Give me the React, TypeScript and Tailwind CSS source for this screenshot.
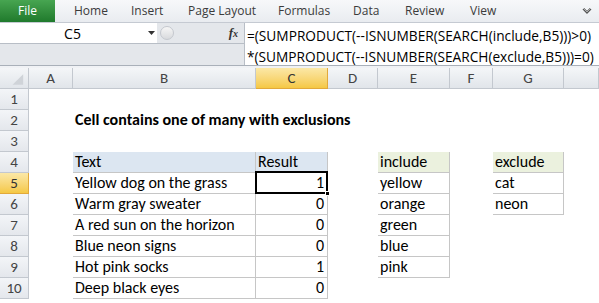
import React from "react";

const cols = ["", "A", "B", "C", "D", "E", "F", "G", ""];

const bRows: Record<number, [string, string]> = {
  4: ["Text", "Result"],
  5: ["Yellow dog on the grass", "1"],
  6: ["Warm gray sweater", "0"],
  7: ["A red sun on the horizon", "0"],
  8: ["Blue neon signs", "0"],
  9: ["Hot pink socks", "1"],
  10: ["Deep black eyes", "0"],
};
const eRows: Record<number, string> = { 4: "include", 5: "yellow", 6: "orange", 7: "green", 8: "blue", 9: "pink" };
const gRows: Record<number, string> = { 4: "exclude", 5: "cat", 6: "neon" };

function inTable(c: number, r: number) {
  if ((c === 2 || c === 3) && r >= 4 && r <= 10) return true;
  if (c === 5 && r >= 4 && r <= 9) return true;
  if (c === 7 && r >= 4 && r <= 6) return true;
  return false;
}

function Cell({ c, r }: { c: number; r: number }) {
  const t = inTable(c, r);
  const leftOfTable = inTable(c + 1, r);
  const aboveTable = inTable(c, r + 1) && !t;
  let bg = "";
  if (r === 4 && (c === 2 || c === 3)) bg = "bg-[#dce6f1]";
  if (r === 4 && (c === 5 || c === 7)) bg = "bg-[#ebf1de]";
  const br = t || leftOfTable ? "border-r border-[#c6c6c6]" : "border-r border-transparent";
  const bb = t || aboveTable ? "border-b border-[#c6c6c6]" : "border-b border-transparent";
  let text = "";
  let align = "justify-start pl-[2px]";
  if (c === 2 && bRows[r]) text = bRows[r][0];
  if (c === 3 && bRows[r]) {
    text = bRows[r][1];
    if (r !== 4) align = "justify-end pr-[3px]";
  }
  if (c === 5 && eRows[r]) text = eRows[r];
  if (c === 7 && gRows[r]) text = gRows[r];
  const selected = c === 3 && r === 5;
  return (
    <div className={`relative flex items-end overflow-visible whitespace-nowrap ${bg} ${br} ${bb} ${align}`}>
      {c === 2 && r === 2 ? (
        <span className="relative z-10 font-bold text-[16px] leading-none pb-[2px] text-black">Cell contains one of many with exclusions</span>
      ) : (
        <span className="text-[16px] leading-none pb-[2px] text-black">{text}</span>
      )}
      {selected && (
        <div className="absolute left-[-1px] top-[-2px] right-[-1px] bottom-[-1px] border-2 border-black z-10">
          <div className="absolute right-[-4px] bottom-[-4px] w-[5px] h-[5px] bg-black border border-white" />
        </div>
      )}
    </div>
  );
}

export default function App() {
  const rows = Array.from({ length: 10 }, (_, i) => i + 1);
  return (
    <div className="w-[599px] h-[303px] overflow-hidden bg-white" style={{ fontFamily: "Carlito, Lato, 'Liberation Sans', sans-serif" }}>
      {/* Ribbon tabs */}
      <div className="h-[23px] flex items-stretch bg-gradient-to-b from-[#f7f8fa] to-[#e9ecf0] border-b border-[#c5cad2] text-[12px] text-[#3b3b3b]" style={{ fontFamily: "'Open Sans', 'Noto Sans', sans-serif" }}>
        <div className="w-[55px] flex items-center justify-center text-white bg-gradient-to-b from-[#47a551] to-[#1f7a2c]">File</div>
        <div className="flex items-center pl-[19px]">
          <span className="w-[57px]">Home</span>
          <span className="w-[57px]">Insert</span>
          <span className="w-[90px]">Page Layout</span>
          <span className="w-[75px]">Formulas</span>
          <span className="w-[52px]">Data</span>
          <span className="w-[65px]">Review</span>
          <span>View</span>
        </div>
        <div className="flex-1" />
        <div className="w-[24px] flex items-center justify-center text-[#555]">
          <svg width="10" height="8" viewBox="0 0 10 8"><path d="M1 2 L5 6 L9 2" fill="none" stroke="#555" strokeWidth="1.3" /><path d="M2 1 L5 4 L8 1" fill="none" stroke="#888" strokeWidth="1" /></svg>
        </div>
      </div>
      {/* Formula bar */}
      <div className="h-[43px] flex bg-[#e4e7eb] border-b border-[#a9b0b9]">
        <div className="w-[244px] flex flex-col">
          <div className="h-[21px] flex items-center bg-white border-b border-[#b8bec6]">
            <div className="w-[145px] h-full bg-white flex items-center justify-center text-[14px] text-black" style={{ fontFamily: "'Open Sans', sans-serif" }}>C5</div>
            <div className="w-[12px] flex items-center justify-center">
              <svg width="7" height="4" viewBox="0 0 7 4"><path d="M0 0 L7 0 L3.5 4 Z" fill="#333" /></svg>
            </div>
            <div className="flex-1 h-full bg-[#e4e7eb] flex items-center">
              <div className="ml-[3px] w-[14px] h-[14px] rounded-full border border-[#c4c8ce] bg-gradient-to-b from-[#f6f6f6] to-[#d8dadd]" />
              <div className="flex-1" />
              <span className="mr-[6px] italic font-bold text-[13px] text-[#333]" style={{ fontFamily: "'Liberation Serif', serif" }}>f<span className="text-[10px]">x</span></span>
            </div>
          </div>
          <div className="flex-1" />
        </div>
        <div className="flex-1 bg-white border-l border-[#b8bec6] pl-[2px] pt-[2px] text-[13.7px] leading-[21px] text-black whitespace-nowrap" style={{ fontFamily: "'Open Sans', sans-serif" }}>
          <div>=(SUMPRODUCT(--ISNUMBER(SEARCH(include,B5)))&gt;0)</div>
          <div>*(SUMPRODUCT(--ISNUMBER(SEARCH(exclude,B5)))=0)</div>
        </div>
      </div>
      <div className="h-[2px] bg-[#f0f2f5]" />
      {/* Grid */}
      <div className="grid grid-cols-[29px_44px_183px_72px_50px_72px_43px_71px_1fr] grid-rows-[21px_repeat(10,21px)]">
        {cols.map((c, i) => (
          <div
            key={"h" + i}
            className={`flex items-center justify-center text-[15px] border-b border-r ${
              i === 3
                ? "bg-gradient-to-b from-[#fbe8a6] to-[#f5c843] border-[#e2a93b] text-[#333]"
                : "bg-gradient-to-b from-[#f4f6f8] to-[#e1e5ea] border-[#c3c8cf] text-[#444]"
            }`}
          >
            {i === 0 ? (
              <svg width="29" height="21" viewBox="0 0 29 21"><path d="M24 6 L24 17 L13 17 Z" fill="#cfd3d8" /></svg>
            ) : (
              c
            )}
          </div>
        ))}
        {rows.map((r) => (
          <React.Fragment key={r}>
            <div
              className={`flex items-center justify-center text-[15px] border-b border-r ${
                r === 5
                  ? "bg-gradient-to-b from-[#fbe8a6] to-[#f5c843] border-[#e2a93b] text-[#333]"
                  : "bg-gradient-to-b from-[#f3f5f8] to-[#e4e7ec] border-[#c3c8cf] text-[#444]"
              }`}
            >
              {r}
            </div>
            {[1, 2, 3, 4, 5, 6, 7, 8].map((c) => (
              <Cell key={c} c={c} r={r} />
            ))}
          </React.Fragment>
        ))}
      </div>
    </div>
  );
}
